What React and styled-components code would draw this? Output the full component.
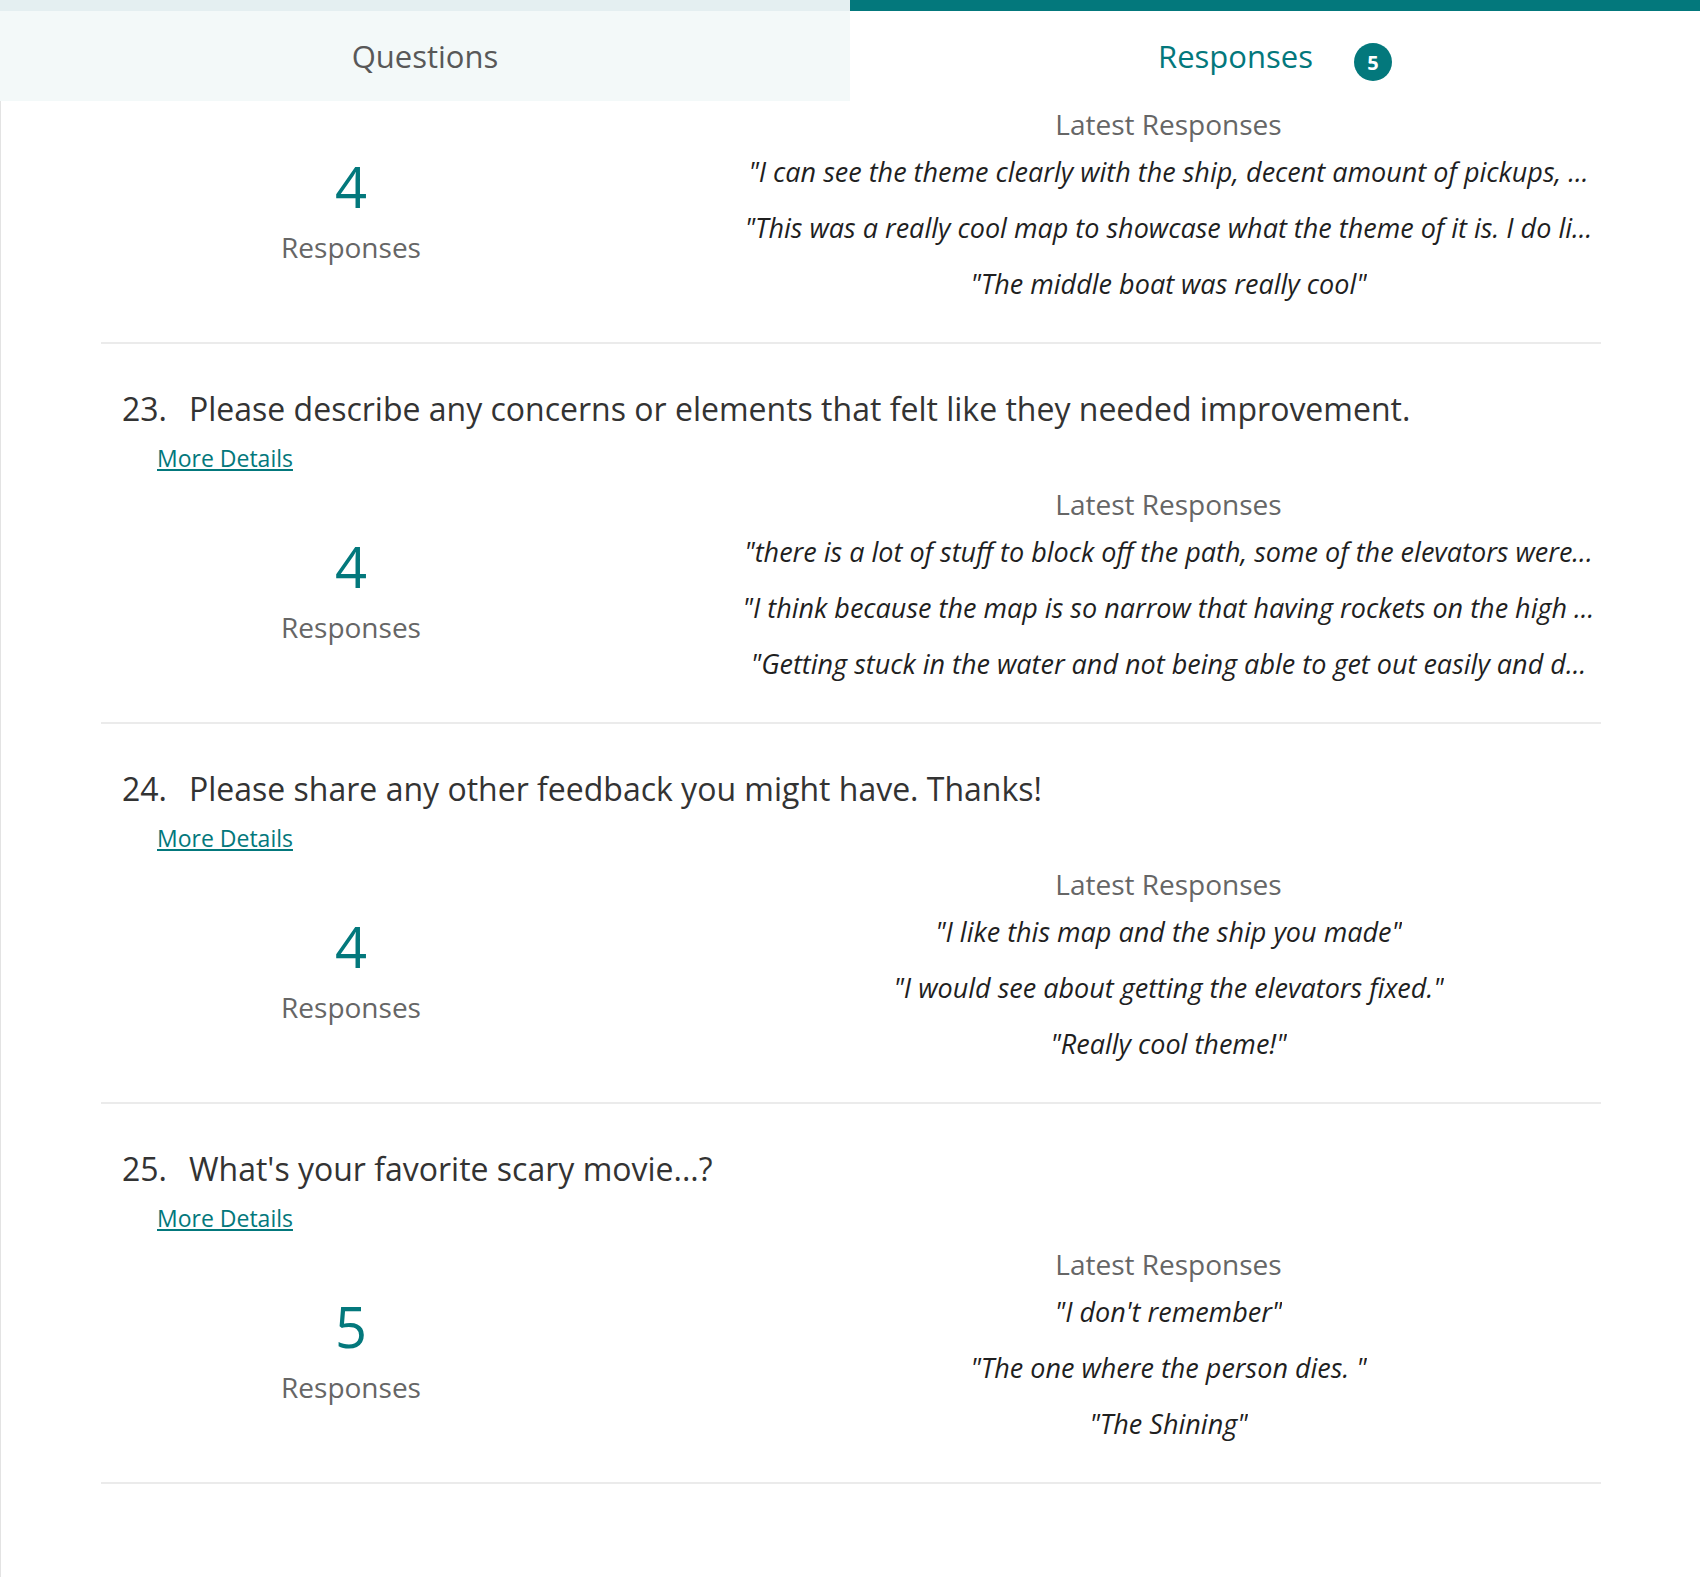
import React from 'react';
import styled, { createGlobalStyle } from 'styled-components';

const GlobalStyle = createGlobalStyle`
  html, body { margin: 0; padding: 0; background: #ffffff; }
  body { font-family: 'Open Sans', 'Noto Sans', sans-serif; }
  * { box-sizing: border-box; }
`;

const TEAL = '#03787c';

const Page = styled.div`
  width: 1700px;
  min-height: 1577px;
  background: #fff;
`;

const TabBar = styled.div`
  display: grid;
  grid-template-columns: 1fr 1fr;
  height: 101px;
`;

const Tab = styled.div`
  display: flex;
  align-items: center;
  justify-content: center;
  gap: 41px;
  border-top: 11px solid ${p => (p.$active ? TEAL : '#e4eff1')};
  background: ${p => (p.$active ? '#ffffff' : '#f3f9f9')};
  color: ${p => (p.$active ? TEAL : '#585858')};
  font-size: 31px;
  font-weight: 400;
`;

const Badge = styled.span`
  display: inline-flex;
  align-items: center;
  justify-content: center;
  width: 38px;
  height: 38px;
  margin-top: 12px;
  border-radius: 50%;
  background: ${TEAL};
  color: #fff;
  font-size: 20px;
  font-weight: 700;
`;

const Content = styled.div`
  border-left: 1px solid #e3e3e3;
  padding: 0 99px 0 100px;
  min-height: 1476px;
`;

const Section = styled.section`
  border-bottom: 2px solid #ebebeb;
  padding: ${p => (p.$partial ? '3px' : '45px')} 0 30px;
`;

const Title = styled.div`
  display: flex;
  padding-left: 21px;
  font-size: 32px;
  line-height: 40px;
  color: #333333;
  white-space: nowrap;
`;

const QNum = styled.span`
  display: inline-block;
  width: 67px;
`;

const MoreLink = styled.a`
  display: inline-block;
  margin: 13px 0 0 56px;
  font-size: 23px;
  line-height: 32px;
  color: ${TEAL};
  text-decoration: underline;
  cursor: pointer;
`;

const Body = styled.div`
  display: grid;
  grid-template-columns: 500px 1fr;
  align-items: center;
  margin-top: ${p => (p.$partial ? '0' : '10px')};
`;

const CountCol = styled.div`
  display: flex;
  flex-direction: column;
  align-items: center;
  padding-top: 3px;
`;

const BigNumber = styled.div`
  font-size: 56px;
  line-height: 64px;
  font-weight: 400;
  color: ${TEAL};
`;

const CountLabel = styled.div`
  margin-top: 11px;
  font-size: 28px;
  line-height: 36px;
  color: #666666;
`;

const ResponsesCol = styled.div`
  display: flex;
  flex-direction: column;
  align-items: center;
  padding-left: 135px;
  min-width: 0;
`;

const LatestLabel = styled.div`
  font-size: 28px;
  line-height: 40px;
  color: #666666;
`;

const Line = styled.div`
  max-width: 100%;
  font-size: 27px;
  line-height: 56px;
  font-style: italic;
  color: #1f1f1f;
  white-space: nowrap;
  overflow: hidden;
  text-overflow: ellipsis;
`;

const sections = [
  {
    partial: true,
    count: 4,
    lines: [
      '"I can see the theme clearly with the ship, decent amount of pickups, ...',
      '"This was a really cool map to showcase what the theme of it is. I do li...',
      '"The middle boat was really cool"',
    ],
  },
  {
    num: '23.',
    title: 'Please describe any concerns or elements that felt like they needed improvement.',
    count: 4,
    lines: [
      '"there is a lot of stuff to block off the path, some of the elevators were...',
      '"I think because the map is so narrow that having rockets on the high ...',
      '"Getting stuck in the water and not being able to get out easily and d...',
    ],
  },
  {
    num: '24.',
    title: 'Please share any other feedback you might have. Thanks!',
    count: 4,
    lines: [
      '"I like this map and the ship you made"',
      '"I would see about getting the elevators fixed."',
      '"Really cool theme!"',
    ],
  },
  {
    num: '25.',
    title: "What's your favorite scary movie...?",
    count: 5,
    lines: ['"I don\'t remember"', '"The one where the person dies. "', '"The Shining"'],
  },
];

export default function App() {
  return (
    <Page>
      <GlobalStyle />
      <TabBar>
        <Tab>Questions</Tab>
        <Tab $active>
          <span>Responses</span>
          <Badge>5</Badge>
        </Tab>
      </TabBar>
      <Content>
        {sections.map((s, i) => (
          <Section key={i} $partial={s.partial}>
            {!s.partial && (
              <>
                <Title>
                  <QNum>{s.num}</QNum>
                  <span>{s.title}</span>
                </Title>
                <MoreLink>More Details</MoreLink>
              </>
            )}
            <Body $partial={s.partial}>
              <CountCol>
                <BigNumber>{s.count}</BigNumber>
                <CountLabel>Responses</CountLabel>
              </CountCol>
              <ResponsesCol>
                <LatestLabel>Latest Responses</LatestLabel>
                {s.lines.map((l, j) => (
                  <Line key={j}>{l}</Line>
                ))}
              </ResponsesCol>
            </Body>
          </Section>
        ))}
      </Content>
    </Page>
  );
}
